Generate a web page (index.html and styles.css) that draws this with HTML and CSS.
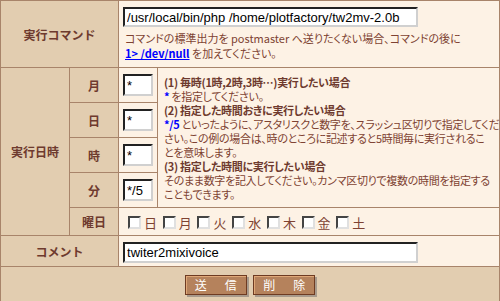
FILE: index.html
```html
<!DOCTYPE html>
<html lang="ja">
<head>
    <meta charset="UTF-8">
    <title>cron 設定</title>
    <link rel="stylesheet" href="styles.css">
</head>
<body>
    <form class="cron-form">
        <table class="form">
            <colgroup>
                <col class="c1">
                <col class="c2">
                <col class="c3">
                <col>
            </colgroup>
            <tr class="row-cmd">
                <th colspan="2" class="label">実行コマンド</th>
                <td colspan="2" class="field cmd">
                    <input type="text" class="text wide" value="/usr/local/bin/php /home/plotfactory/tw2mv-2.0b">
                    <p class="note">コマンドの標準出力を postmaster へ送りたくない場合、コマンドの後に<br><a href="#" class="blue">1&gt; /dev/null</a> を加えてください。</p>
                </td>
            </tr>
            <tr class="row-time">
                <th rowspan="5" class="label">実行日時</th>
                <th class="label">月</th>
                <td class="field cell-in"><input type="text" class="text short" value="*"></td>
                <td rowspan="4" class="field help">
                    <b>(1) 毎時(1時,2時,3時…)実行したい場合</b><br>
                    <b class="blue">*</b> を指定してください。<br>
                    <b>(2) 指定した時間おきに実行したい場合</b><br>
                    <b class="blue">*/5</b> といったように、アスタリスクと数字を、スラッシュ区切りで指定してくだ<br>
                    さい。この例の場合は、時のところに記述すると5時間毎に実行されるこ<br>
                    とを意味します。<br>
                    <b>(3) 指定した時間に実行したい場合</b><br>
                    そのまま数字を記入してください。カンマ区切りで複数の時間を指定する<br>
                    こともできます。
                </td>
            </tr>
            <tr class="row-time">
                <th class="label">日</th>
                <td class="field cell-in"><input type="text" class="text short" value="*"></td>
            </tr>
            <tr class="row-time">
                <th class="label">時</th>
                <td class="field cell-in"><input type="text" class="text short" value="*"></td>
            </tr>
            <tr class="row-time">
                <th class="label">分</th>
                <td class="field cell-in"><input type="text" class="text short" value="*/5"></td>
            </tr>
            <tr class="row-week">
                <th class="label">曜日</th>
                <td colspan="2" class="field week">
                    <label><input type="checkbox" class="check">日</label>
                    <label><input type="checkbox" class="check">月</label>
                    <label><input type="checkbox" class="check">火</label>
                    <label><input type="checkbox" class="check">水</label>
                    <label><input type="checkbox" class="check">木</label>
                    <label><input type="checkbox" class="check">金</label>
                    <label><input type="checkbox" class="check">土</label>
                </td>
            </tr>
            <tr class="row-comment">
                <th colspan="2" class="label">コメント</th>
                <td colspan="2" class="field comment"><input type="text" class="text wide" value="twiter2mixivoice"></td>
            </tr>
            <tr class="row-buttons">
                <td colspan="4" class="buttons">
                    <button type="button" class="btn">送　信</button>
                    <button type="button" class="btn">削　除</button>
                </td>
            </tr>
        </table>
    </form>
</body>
</html>
```

FILE: styles.css
```css
body {
    margin: 0;
    background: #fff;
    font-family: "Noto Sans CJK JP", sans-serif;
    font-size: 12px;
    color: #7e4232;
}

.cron-form {
    margin: 0;
}

.form {
    width: 500px;
    border-collapse: collapse;
    border: 1px solid #a8846a;
    table-layout: fixed;
}

.c1 { width: 69px; }
.c2 { width: 49px; }
.c3 { width: 39px; }

th,
td {
    border: 1px solid #a8846a;
    padding: 0;
}

.label {
    background: #e2cdb0;
    color: #6e3a2e;
    font-weight: bold;
    text-align: center;
    vertical-align: middle;
}

.field {
    background: #fdf2e5;
    vertical-align: middle;
}

.row-cmd { height: 67px; }
.row-time { height: 35px; }
.row-week { height: 28px; }
.row-comment { height: 31px; }
.row-buttons { height: 35px; }

.cmd {
    padding: 0 4px;
}

.note {
    margin: 4px 0 0 2px;
    font-size: 11px;
    line-height: 15px;
    font-feature-settings: "palt";
}

.blue {
    color: #0000ff;
    font-weight: bold;
}

.text {
    display: block;
    box-sizing: border-box;
    height: 20px;
    margin: 0;
    padding: 0 2px;
    background: #fff;
    border: 2px solid;
    border-color: #222 #d0d0d0 #d0d0d0 #222;
    font-family: "Liberation Sans", sans-serif;
    font-size: 13px;
    color: #000;
    outline: none;
}

.wide {
    width: 295px;
}

.comment {
    padding: 2px 4px 0;
}

.comment .wide {
    height: 21px;
}

.cell-in {
    padding: 0 4px;
}

.short {
    width: 30px;
    height: 22px;
}

.help {
    padding: 0 2px 0 6px;
    font-size: 11px;
    line-height: 14px;
    letter-spacing: -0.3px;
    white-space: nowrap;
    font-feature-settings: "palt";
}

.help b {
    color: #6e3a2e;
}

.help b.blue {
    color: #0000ff;
}

.week {
    padding: 2px 0 0 9px;
}

.week label {
    display: inline-flex;
    align-items: center;
    gap: 3px;
    margin-right: 3px;
    font-size: 13px;
}

.check {
    appearance: none;
    width: 13px;
    height: 13px;
    margin: 0;
    background: #fff;
    border: 2px solid;
    border-color: #444 #e0e0e0 #e0e0e0 #444;
}

.buttons {
    background: #e2cdb0;
    text-align: center;
    vertical-align: middle;
    padding-top: 1px;
}

.btn {
    width: 62px;
    height: 20px;
    margin: 0 2px;
    padding: 0 0 0 3px;
    background: #b5825c;
    color: #fff;
    border: 1px solid #6e3b22;
    box-shadow: inset 1px 1px 0 #e0a878, 2px 2px 0 #a89a8c;
    font-family: "Noto Sans CJK JP", sans-serif;
    font-size: 12px;
    letter-spacing: 3px;
    cursor: pointer;
}
```
